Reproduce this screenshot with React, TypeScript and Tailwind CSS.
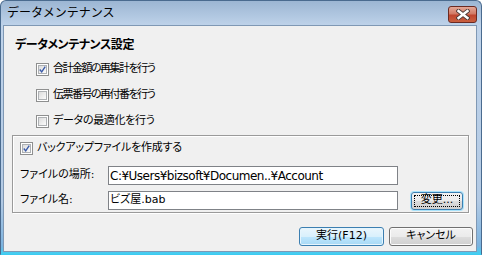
import React from 'react';

const jp = "[font-family:'DejaVu_Sans','Noto_Sans_CJK_JP',sans-serif] [font-feature-settings:'palt']";

const CheckBox: React.FC<{ checked?: boolean }> = ({ checked = false }) => (
  <div className="w-[13px] h-[13px] shrink-0 border border-[#8e8f8f] bg-white p-[1px]">
    <div className="w-full h-full border border-[#aeb1b4] bg-[linear-gradient(135deg,#dcdcdc,#fbfbfb)] flex items-center justify-center">
      {checked && (
        <svg width="9" height="9" viewBox="0 0 9 9">
          <path d="M1 4.5 L3.5 7.5 L8 0.8" fill="none" stroke="#3a5aa8" strokeWidth="1.8" />
        </svg>
      )}
    </div>
  </div>
);

const Option: React.FC<{ label: string; checked?: boolean; tight?: boolean }> = ({ label, checked, tight }) => (
  <div className="h-[26px] flex items-center gap-[4px]">
    <CheckBox checked={checked} />
    <span className={`text-[11px] text-black ${tight ? 'tracking-[-1.5px]' : 'tracking-[-0.3px]'}`}>{label}</span>
  </div>
);

const App: React.FC = () => {
  return (
    <div className={`w-[482px] h-[255px] flex flex-col rounded-t-[6px] border border-[#4a6b8f] border-b-[#3ccbf0] bg-[linear-gradient(to_bottom,#9cb6d3_0px,#bfd3ea_25px,#b3cae4_200px,#7cb3df_245px,#45ccf1_252px)] ${jp}`}>
      <div className="h-[24px] flex items-center justify-between pl-[6px] pr-[4px]">
        <span className="text-[12px] [font-feature-settings:normal] text-black">データメンテナンス</span>
        <div className="w-[29px] h-[17px] mt-[2px] rounded-[3px] border border-[#6b2a22] bg-[linear-gradient(to_bottom,#e3a797_0%,#d27b66_45%,#c0462f_55%,#c9603f_100%)] flex items-center justify-center">
          <svg width="14" height="11" viewBox="0 0 14 11">
            <path d="M2.5 2 L11.5 9 M11.5 2 L2.5 9" stroke="#4b3a38" strokeWidth="4.2" strokeLinecap="square" />
            <path d="M2.5 2 L11.5 9 M11.5 2 L2.5 9" stroke="#ffffff" strokeWidth="2.4" strokeLinecap="square" />
          </svg>
        </div>
      </div>

      <div className="flex-1 ml-[2px] mr-[4px] mb-[2px] border border-[#7f98b4] bg-[#f0f0f0] flex flex-col text-black">
        <div className="mt-[11px] pl-[11px] h-[16px] flex items-center text-[12px] font-bold tracking-[-0.4px]">
          データメンテナンス設定
        </div>

        <div className="mt-[3px] pl-[32px] flex flex-col">
          <Option label="合計金額の再集計を行う" checked tight />
          <Option label="伝票番号の再付番を行う" tight />
          <Option label="データの最適化を行う" />
        </div>

        <div className="mt-[1px] ml-[8px] w-[457px] h-[78px] border border-[#9a9a9a] [box-shadow:inset_1px_1px_0_#fff,1px_1px_0_#fff] flex flex-col pl-[7px]">
          <div className="mt-[4px] h-[16px] flex items-center gap-[4px]">
            <CheckBox checked />
            <span className="text-[11px] tracking-[-0.2px]">バックアップファイルを作成する</span>
          </div>
          <div className="mt-[10px] h-[19px] flex items-center">
            <span className="w-[88px] text-[11px]">ファイルの場所:</span>
            <div className="w-[290px] h-[19px] border border-[#7f8287] bg-white flex items-center pl-[1px] text-[12px] tracking-[-0.5px] overflow-hidden whitespace-nowrap">
              C:¥Users¥bizsoft¥Documen..¥Account
            </div>
          </div>
          <div className="mt-[6px] h-[19px] flex items-center">
            <span className="w-[88px] text-[11px]">ファイル名:</span>
            <div className="w-[290px] h-[19px] border border-[#7f8287] bg-white flex items-center pl-[1px] text-[11px]">
              ビズ屋.bab
            </div>
            <div className="ml-[13px] w-[52px] h-[18px] rounded-[3px] border border-[#3c7fb1] [box-shadow:0_0_0_1px_#a9e3fb] bg-[linear-gradient(to_bottom,#f2f2f2_0%,#ebebeb_50%,#dddddd_51%,#cfcfcf_100%)] p-[2px]">
              <div className="w-full h-full border border-dotted border-black flex items-center justify-center text-[11px]">
                変更...
              </div>
            </div>
          </div>
        </div>

        <div className="mt-[14px] pr-[3px] flex justify-end gap-[5px]">
          <div className="w-[85px] h-[19px] rounded-[3px] border border-[#3c7fb1] [box-shadow:inset_0_0_0_1px_#e6f5fd] bg-[linear-gradient(to_bottom,#eaf6fd_0%,#d9f0fc_50%,#bee6fd_51%,#a7d9f5_100%)] flex items-center justify-center text-[11px]">
            実行(F12)
          </div>
          <div className="w-[84px] h-[19px] rounded-[3px] border border-[#707070] [box-shadow:inset_0_0_0_1px_#fcfcfc] bg-[linear-gradient(to_bottom,#f2f2f2_0%,#ebebeb_50%,#dddddd_51%,#cfcfcf_100%)] flex items-center justify-center text-[11px]">
            キャンセル
          </div>
        </div>
      </div>
    </div>
  );
};

export default App;
